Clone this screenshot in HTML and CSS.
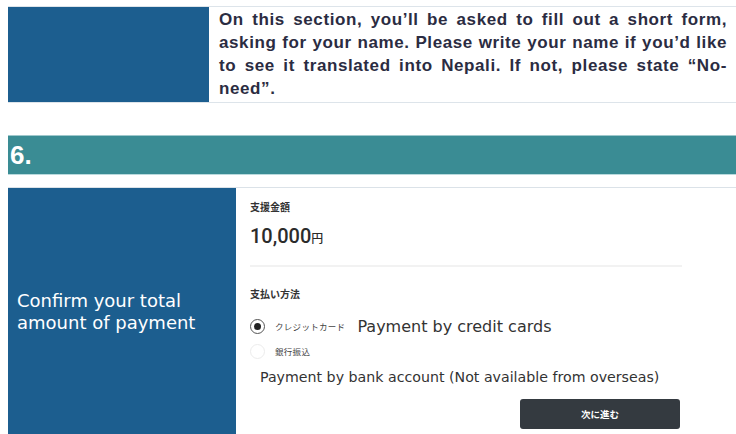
FILE: index.html
```html
<!DOCTYPE html>
<html lang="ja">
<head>
<meta charset="utf-8">
<title>Step 6</title>
<link rel="stylesheet" href="styles.css">
</head>
<body>
<div class="page">
  <div class="intro">
    <div class="intro-side"></div>
    <div class="intro-text">On this section, you’ll be asked to fill out a short form, asking for your name. Please write your name if you’d like to see it translated into Nepali. If not, please state “No-need”.</div>
  </div>

  <div class="step-head">6.</div>

  <div class="confirm">
    <div class="confirm-side">
      <p class="confirm-title">Confirm your total amount of payment</p>
    </div>
    <div class="confirm-body">
      <div class="label">支援金額</div>
      <div class="amount">10,000<span class="yen">円</span></div>
      <div class="divider"></div>
      <div class="label label-pay">支払い方法</div>
      <div class="option">
        <span class="radio radio-on"></span>
        <span class="opt-jp">クレジットカード</span>
        <span class="opt-en">Payment by credit cards</span>
      </div>
      <div class="option option-2">
        <span class="radio"></span>
        <span class="opt-jp">銀行振込</span>
      </div>
      <div class="bank-note">Payment by bank account (Not available from overseas)</div>
      <div class="actions">
        <button class="next-btn" type="button">次に進む</button>
      </div>
    </div>
  </div>
</div>
</body>
</html>
```

FILE: styles.css
```css
html, body {
  margin: 0;
  padding: 0;
  background: #ffffff;
}

.page {
  padding: 6px 0 0 8px;
  font-family: "Noto Sans", "Noto Sans CJK JP", sans-serif;
}

/* intro row */
.intro {
  display: flex;
  border-top: 1px solid #dde4ea;
  border-bottom: 1px solid #dde4ea;
}

.intro-side {
  width: 201px;
  flex: none;
  background: #1c5e8f;
}

.intro-text {
  flex: 1;
  padding: 1px 9px 2px 10px;
  font-family: "Liberation Sans", Arial, sans-serif;
  font-weight: bold;
  font-size: 17px;
  line-height: 23px;
  letter-spacing: 0.6px;
  text-align: justify;
  color: #2b2c42;
}

/* step header */
.step-head {
  margin-top: 32px;
  height: 38px;
  background: #3a8c94;
  border-top: 1px solid #9fc8cc;
  border-bottom: 1px solid #b9dadd;
  color: #ffffff;
  font-family: "Liberation Sans", Arial, sans-serif;
  font-weight: bold;
  font-size: 26px;
  line-height: 38px;
  padding-left: 2px;
}

/* confirm row */
.confirm {
  margin-top: 12px;
  display: flex;
  border-top: 1px solid #dbe2e8;
}

.confirm-side {
  width: 228px;
  flex: none;
  background: #1c5e8f;
  display: flex;
  align-items: center;
  padding: 0 9px;
  box-sizing: border-box;
}

.confirm-title {
  margin: 0;
  color: #ffffff;
  font-family: "DejaVu Sans", Verdana, sans-serif;
  font-size: 18px;
  line-height: 22px;
}

.confirm-body {
  flex: 1;
  padding: 12px 54px 6px 14px;
  color: #333333;
}

.label {
  font-family: "Noto Sans CJK JP", sans-serif;
  font-size: 10px;
  font-weight: bold;
  line-height: 14px;
  color: #333;
}

.amount {
  margin-top: 10px;
  font-family: Roboto, "Noto Sans", sans-serif;
  font-size: 20px;
  font-weight: 500;
  line-height: 24px;
  color: #2b2b2b;
}

.yen {
  font-family: "Noto Sans CJK JP", sans-serif;
  font-size: 12px;
  font-weight: 500;
}

.divider {
  margin-top: 15px;
  height: 2px;
  background: #f2f2f2;
}

.label-pay {
  margin-top: 20px;
}

.option {
  display: flex;
  align-items: center;
  margin-top: 15px;
  height: 20px;
}

.option-2 {
  margin-top: 5px;
}

.radio {
  width: 15px;
  height: 15px;
  box-sizing: border-box;
  border-radius: 50%;
  border: 1px solid #ececec;
  flex: none;
  display: flex;
  align-items: center;
  justify-content: center;
}

.radio-on {
  border: 1.5px solid #555;
}

.radio-on::after {
  content: "";
  width: 7px;
  height: 7px;
  border-radius: 50%;
  background: #222;
}

.opt-jp {
  margin-left: 10px;
  font-family: "Noto Sans CJK JP", sans-serif;
  font-size: 8.5px;
  color: #444;
  letter-spacing: 0.3px;
}

.opt-en {
  margin-left: 12px;
  font-family: "DejaVu Sans", Verdana, sans-serif;
  font-size: 16px;
  color: #333;
}

.bank-note {
  margin-top: 6px;
  padding-left: 10px;
  font-family: "DejaVu Sans", Verdana, sans-serif;
  font-size: 14.2px;
  line-height: 20px;
  color: #333;
}

.actions {
  display: flex;
  justify-content: flex-end;
  margin-top: 12px;
  padding-right: 2px;
}

.next-btn {
  width: 160px;
  height: 30px;
  border: none;
  border-radius: 3px;
  background: #343a40;
  color: #ffffff;
  font-family: "Noto Sans CJK JP", sans-serif;
  font-weight: bold;
  font-size: 9.5px;
  cursor: pointer;
}
```
